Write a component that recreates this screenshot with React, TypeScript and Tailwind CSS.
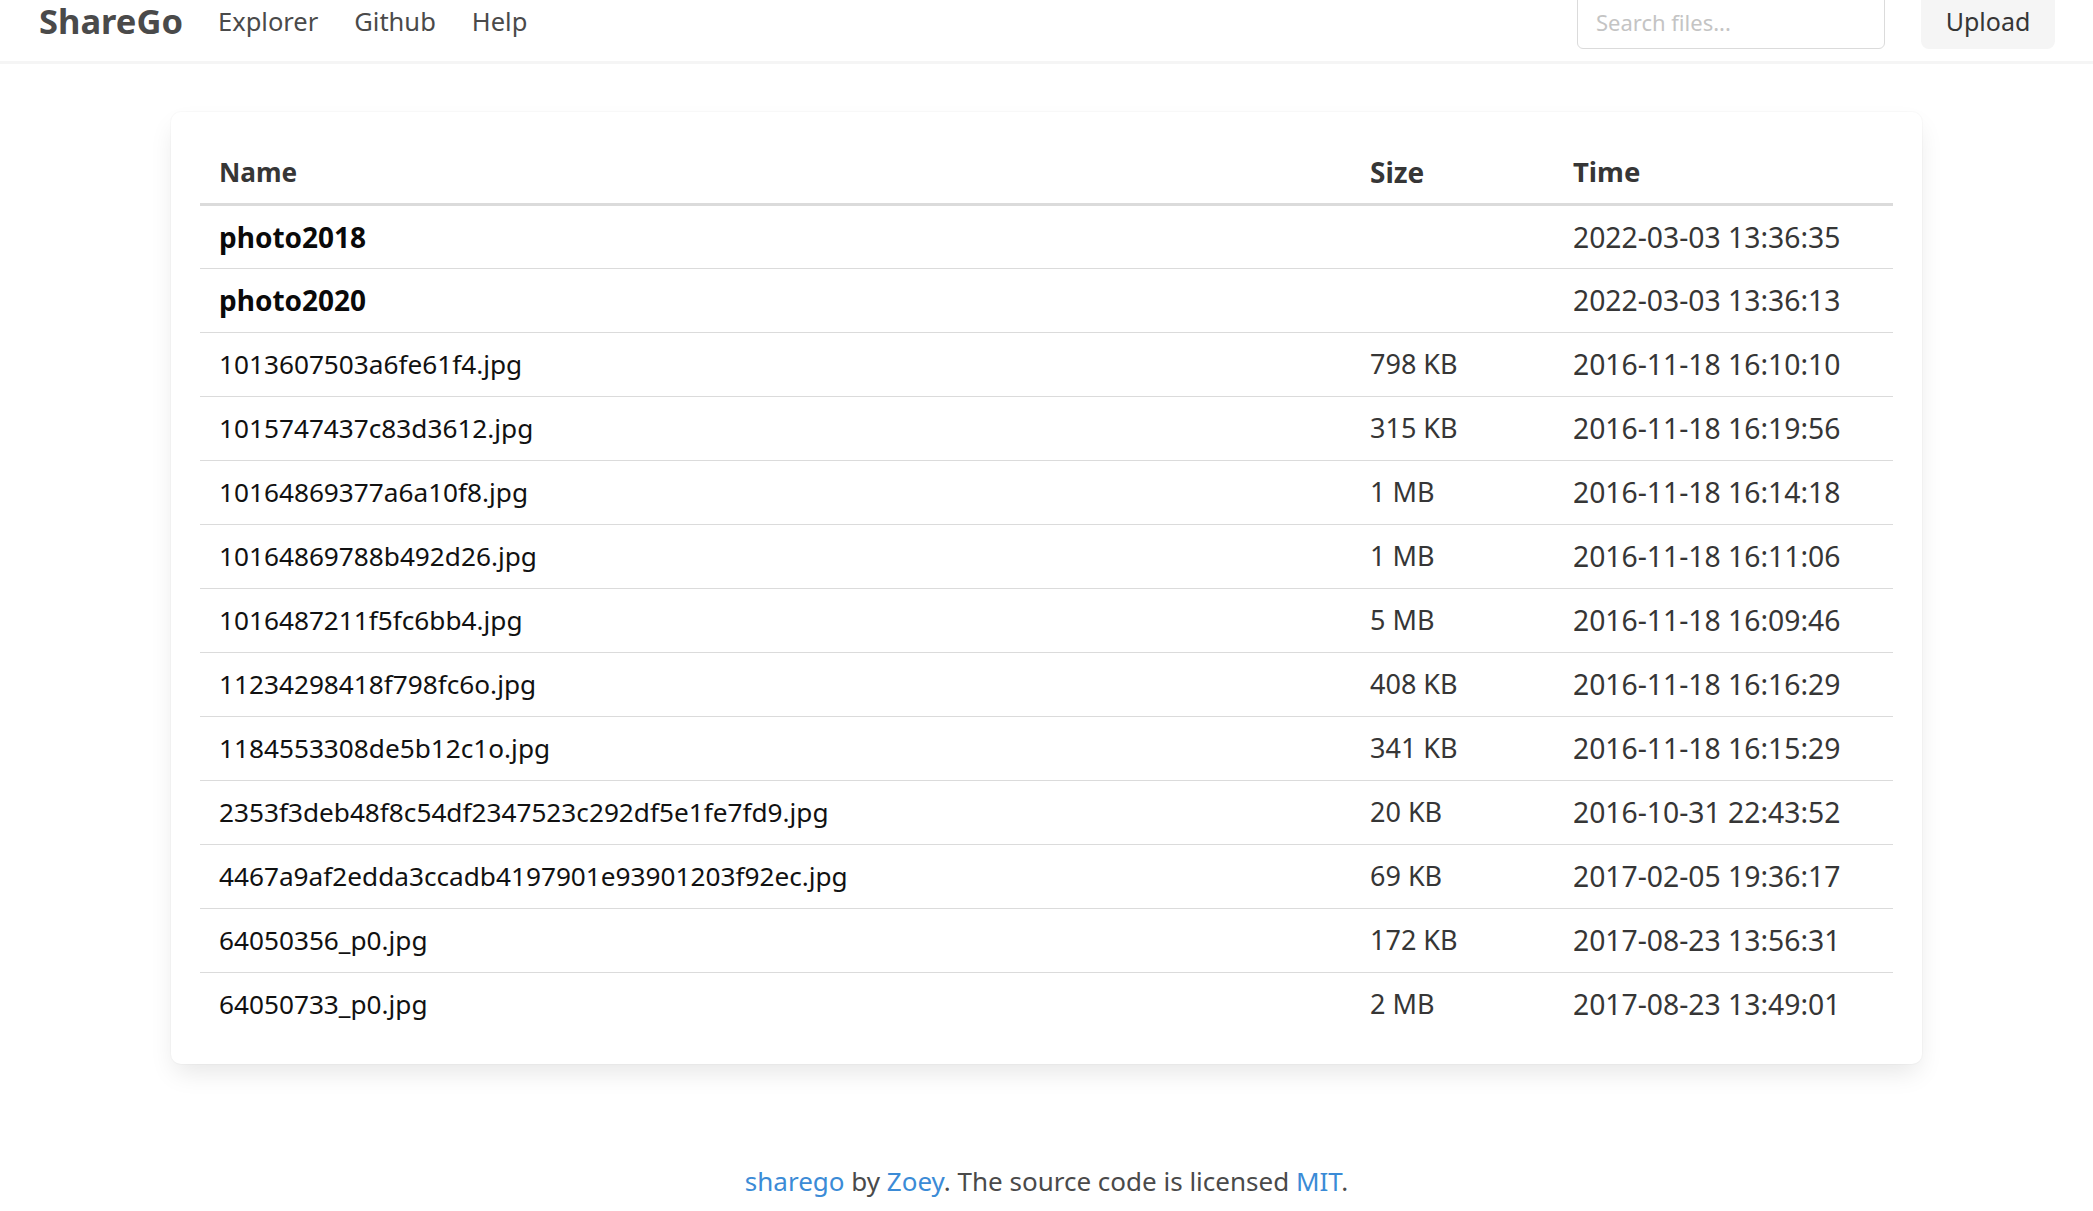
import React from "react";

type FileRow = {
    name: string
    size: string
    time: string
    dir?: boolean
}

const files: FileRow[] = [
    { name: "photo2018", size: "", time: "2022-03-03 13:36:35", dir: true },
    { name: "photo2020", size: "", time: "2022-03-03 13:36:13", dir: true },
    { name: "1013607503a6fe61f4.jpg", size: "798 KB", time: "2016-11-18 16:10:10" },
    { name: "1015747437c83d3612.jpg", size: "315 KB", time: "2016-11-18 16:19:56" },
    { name: "10164869377a6a10f8.jpg", size: "1 MB", time: "2016-11-18 16:14:18" },
    { name: "10164869788b492d26.jpg", size: "1 MB", time: "2016-11-18 16:11:06" },
    { name: "1016487211f5fc6bb4.jpg", size: "5 MB", time: "2016-11-18 16:09:46" },
    { name: "11234298418f798fc6o.jpg", size: "408 KB", time: "2016-11-18 16:16:29" },
    { name: "1184553308de5b12c1o.jpg", size: "341 KB", time: "2016-11-18 16:15:29" },
    { name: "2353f3deb48f8c54df2347523c292df5e1fe7fd9.jpg", size: "20 KB", time: "2016-10-31 22:43:52" },
    { name: "4467a9af2edda3ccadb4197901e93901203f92ec.jpg", size: "69 KB", time: "2017-02-05 19:36:17" },
    { name: "64050356_p0.jpg", size: "172 KB", time: "2017-08-23 13:56:31" },
    { name: "64050733_p0.jpg", size: "2 MB", time: "2017-08-23 13:49:01" },
]

const Navbar = () => {
    return (
        <div className="h-[61px] overflow-hidden shadow-[0_3px_0_0_#f5f5f5] relative z-10 bg-white">
            <nav className="flex items-start pl-[39px] pr-[38px] text-[#4a4a4a]">
                <div className="h-[42px] flex items-center">
                    <a href="#" className="text-[34.5px] font-bold text-[#4a4a4a] mr-[35px] leading-[42px]">ShareGo</a>
                    <div className="flex items-center gap-[36px] text-[25.5px] leading-[42px]">
                        <a href="#">Explorer</a>
                        <a href="#">Github</a>
                        <a href="#">Help</a>
                    </div>
                </div>
                <div className="ml-auto -mt-[9px] flex items-center gap-[36px]">
                    <input
                        type="text"
                        placeholder="Search files..."
                        className="w-[308px] h-[58px] border border-[#dbdbdb] rounded-[6px] px-[18px] pt-[4px] text-[22px] placeholder:text-[#c4c4c4] outline-none"
                    />
                    <button className="w-[134px] h-[58px] pt-[4px] bg-[#f5f5f5] rounded-[8px] text-[25px] text-[#363636]">Upload</button>
                </div>
            </nav>
        </div>
    )
}

const App = () => {
    return (
        <div className="min-h-screen bg-white font-['Noto_Sans',sans-serif] text-[#4a4a4a]">
            <Navbar />
            <main className="w-[1751px] mx-auto mt-[51px]">
                <div className="bg-white rounded-[10px] pt-[27px] pb-[28px] px-[29px] shadow-[0_12px_26px_-4px_rgba(10,10,10,0.1),0_0_0_1px_rgba(10,10,10,0.02)]">
                    <table className="w-full table-fixed border-collapse text-[26.2px] leading-[40px]">
                        <thead>
                            <tr className="border-b-[3px] border-[#dbdbdb]">
                                <th className="w-[1151px] h-[65px] pt-[2px] px-[19px] text-left font-bold text-[#363636]">Name</th>
                                <th className="w-[203px] h-[65px] pt-[2px] px-[19px] text-left font-bold text-[#363636] text-[28px]">Size</th>
                                <th className="h-[65px] pt-[2px] px-[19px] text-left font-bold text-[#363636] text-[27.5px]">Time</th>
                            </tr>
                        </thead>
                        <tbody>
                            {files.map((f, i) => (
                                <tr key={f.name} className={i < files.length - 1 ? "border-b border-[#dbdbdb]" : ""}>
                                    <td className={`h-[64px] p-0 px-[19px] ${f.dir ? "font-bold text-[28px] text-[#0a0a0a]" : "text-[#111111]"}`}>
                                        <a href="#">{f.name}</a>
                                    </td>
                                    <td className="h-[64px] p-0 px-[19px] text-[#363636] text-[27px]">{f.size}</td>
                                    <td className="h-[64px] p-0 px-[19px] text-[#363636] text-[28.3px]">{f.time}</td>
                                </tr>
                            ))}
                        </tbody>
                    </table>
                </div>
            </main>
            <footer className="mt-[98px] pb-[12px] text-center text-[26px] text-[#4a4a4a]">
                <a href="#" className="text-[#3b8bd6]">sharego</a> by <a href="#" className="text-[#3b8bd6]">Zoey</a>. The source code is licensed <a href="#" className="text-[#3b8bd6]">MIT</a>.
            </footer>
        </div>
    )
}

export default App
